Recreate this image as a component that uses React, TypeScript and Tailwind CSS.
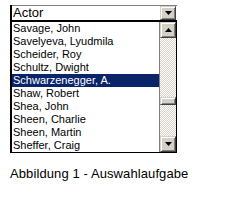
const actors = [
  "Savage, John",
  "Savelyeva, Lyudmila",
  "Scheider, Roy",
  "Schultz, Dwight",
  "Schwarzenegger, A.",
  "Shaw, Robert",
  "Shea, John",
  "Sheen, Charlie",
  "Sheen, Martin",
  "Sheffer, Craig",
];

const selected = 4;

const bevel =
  "bg-[#d4d0c8] border border-t-[#d4d0c8] border-l-[#d4d0c8] border-r-[#404040] border-b-[#404040] shadow-[inset_1px_1px_0_#fff,inset_-1px_-1px_0_#808080]";

function Arrow({ up }: { up?: boolean }) {
  return (
    <svg width="7" height="4" viewBox="0 0 7 4" className="block">
      {up ? <path d="M3.5 0 L7 4 L0 4 Z" fill="#000" /> : <path d="M0 0 L7 0 L3.5 4 Z" fill="#000" />}
    </svg>
  );
}

function ArrowButton({ up, className = "" }: { up?: boolean; className?: string }) {
  return (
    <div className={`flex items-center justify-center ${bevel} ${className}`}>
      <Arrow up={up} />
    </div>
  );
}

export default function App() {
  return (
    <div className="w-[229px] h-[206px] bg-white font-['Liberation_Sans',Arial,sans-serif] text-black">
      <div className="pt-[5px] pl-[10px]">
        <div className="w-[167px] border-l-2 border-black">
          {/* combo */}
          <div className="flex h-[15px] border-t border-[#808080]">
            <div className="flex-1 pl-[1px] text-[13px] leading-[14px]">Actor</div>
            <ArrowButton className="w-[16px] h-[14px] mr-[1px]" />
          </div>
          {/* list */}
          <div className="flex border-t-2 border-b border-r border-black">
            <div className="flex-1 flex flex-col">
              {actors.map((name, i) => (
                <div
                  key={name}
                  className={`h-[13px] pl-[1px] text-[11px] leading-[13px] whitespace-nowrap ${
                    i === selected ? "bg-[#0a246a] text-white" : ""
                  }`}
                >
                  {name}
                </div>
              ))}
            </div>
            <div className="w-[17px] flex flex-col border-l border-[#808080]">
              <ArrowButton up className="h-[16px]" />
              <div className="flex-1 flex flex-col bg-[repeating-conic-gradient(#d4d0c8_0%_25%,#ffffff_0%_50%)] bg-[length:2px_2px]">
                <div className="h-[59px]" />
                <div className={`h-[8px] ${bevel}`} />
              </div>
              <ArrowButton className="h-[16px]" />
            </div>
          </div>
        </div>
      </div>
      <div className="pl-[10px] mt-[13px] text-[13px] leading-[15px] tracking-[0.1px]">
        Abbildung 1 - Auswahlaufgabe
      </div>
    </div>
  );
}
